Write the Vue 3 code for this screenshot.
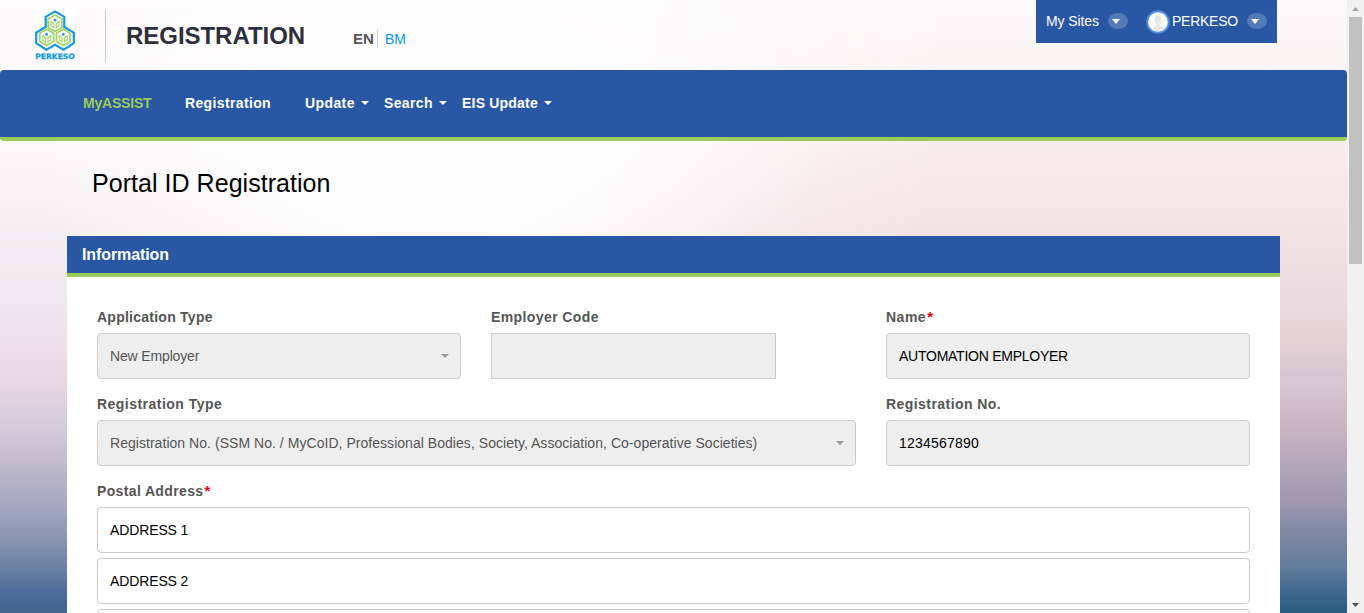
<script setup>
const menu = [
  { label: 'MyASSIST', cls: 'm-home' },
  { label: 'Registration', cls: 'm-reg' },
  { label: 'Update', cls: 'm-upd', drop: true },
  { label: 'Search', cls: 'm-search', drop: true },
  { label: 'EIS Update', cls: 'm-eis', drop: true },
]
const cells = [[20, 13.2], [11.7, 27.4], [28.3, 27.4]]
const addresses = ['ADDRESS 1', 'ADDRESS 2', '']
</script>

<template>
  <div class="screen">
    <div class="page">
      <header class="top">
        <svg class="logo" width="42" height="52" viewBox="-1 0 42 52">
          <rect width="40" height="50" fill="#fff" />
          <path d="M20 1.400 29.300 6.800V17L38.800 22.600V33.200L28.600 39.600 20 34.800 11.400 39.600 1.200 33.200V22.600L10.700 17V6.800Z" fill="none" stroke="#1698dc" stroke-width="2.200" />
          <g v-for="(c, i) in cells" :key="i" :transform="`translate(${c[0]} ${c[1]})`" fill="none" stroke="#9ed364" stroke-width="1.700">
            <path d="M0-8.200 6.900-4.200V4.200L0 8.200-6.900 4.200V-4.200Z" />
            <path d="M-4-2.200V2.600L-1.200 4.600V.6L-4-2.200M4-2.200V2.600L1.200 4.600V.6L4-2.200" stroke-width="1.100" />
            <circle cy="-3" r="1.400" fill="#1698dc" stroke="none" />
          </g>
          <text x="0.200" y="49.300" textLength="39.600" lengthAdjust="spacingAndGlyphs" class="logo-text">PERKESO</text>
        </svg>
        <h1 class="brand"><span>REGISTRATION</span></h1>
        <div class="lang"><b>EN</b><a>BM</a></div>
        <div class="user">
          <span class="sites">My Sites</span>
          <i class="pill"><svg width="8" height="5"><path d="M0 0h8L4 5z" fill="#fff" /></svg></i>
          <svg class="avatar" width="24" height="24" viewBox="0 0 24 24">
            <circle cx="12" cy="12" r="10.8" fill="#fff" stroke="#4e8edd" stroke-width="2" />
            <path d="M12 5.400c-2.600 0-3.800 2-3.400 4.500.2 2 1 3.300 1.700 4v1.400L7 17.500v2.300q5 2.600 10 0v-2.300l-3.300-2.200v-1.400c.7-.7 1.500-2 1.700-4C15.800 7.400 14.600 5.400 12 5.400z" fill="#e6e6e6" />
          </svg>
          <span class="name">PERKESO</span>
          <i class="pill"><svg width="8" height="5"><path d="M0 0h8L4 5z" fill="#fff" /></svg></i>
        </div>
      </header>

      <nav class="nav">
        <a v-for="m in menu" :key="m.label" :class="m.cls"><span>{{ m.label }}</span><svg v-if="m.drop" width="8" height="4"><path d="M0 0h8L4 4z" fill="#fff" /></svg></a>
      </nav>

      <h2 class="title"><span>Portal ID Registration</span></h2>

      <section class="card">
        <div class="card-head"><span>Information</span></div>
        <form class="form">
          <div class="field">
            <label class="l-app">Application Type</label>
            <div class="box off select"><span class="v-new">New Employer</span><svg width="8" height="4"><path d="M0 0h8L4 4z" fill="#999" /></svg></div>
          </div>
          <div class="field">
            <label class="l-code">Employer Code</label>
            <div class="box off code"></div>
          </div>
          <div class="field">
            <label><span class="l-name">Name</span><em>*</em></label>
            <div class="box off"><span class="v-name">AUTOMATION EMPLOYER</span></div>
          </div>
          <div class="field wide">
            <label class="l-rtype">Registration Type</label>
            <div class="box off select"><span class="v-rtype">Registration No. (SSM No. / MyCoID, Professional Bodies, Society, Association, Co-operative Societies)</span><svg width="8" height="4"><path d="M0 0h8L4 4z" fill="#999" /></svg></div>
          </div>
          <div class="field">
            <label class="l-rno">Registration No.</label>
            <div class="box off"><span class="v-rno">1234567890</span></div>
          </div>
          <div class="field full">
            <label><span class="l-post">Postal Address</span><em>*</em></label>
            <div v-for="(a, i) in addresses" :key="i" class="box line"><span class="v-addr">{{ a }}</span></div>
          </div>
        </form>
      </section>
    </div>
    <aside class="scroll">
      <svg width="17" height="17"><path d="M5 11 8.500 7 12 11z" fill="#a3a3a3" /></svg>
      <div class="thumb"></div>
      <svg class="down" width="17" height="17"><path d="M5 7 8.500 11 12 7z" fill="#505050" /></svg>
    </aside>
  </div>
</template>

<style>
body { margin: 0; overflow: hidden; }
</style>

<style scoped>
* { box-sizing: border-box; }
.screen { display: flex; width: 1364px; height: 613px; overflow: hidden; font: 14px/20px "Liberation Sans", Arial, sans-serif; color: #000; white-space: nowrap; }
.page {
  position: relative; isolation: isolate; width: 1347px; height: 613px; overflow: hidden;
  background: linear-gradient(180deg, #fdfbfc 0, #fbf8fa 150px, #f1ecef 260px, #eee6eb 310px, #ecdfe8 350px, #e3d6e1 390px, #cfc9d7 435px, #b9b5c9 475px, #a5a7c0 507px, #8893b0 540px, #647b9f 575px, #4c6c9a 592px, #43628c 613px);
}
.page::before {
  content: ""; position: absolute; inset: 0; z-index: -1;
  background: linear-gradient(180deg, #fcf9fa 0, #faf4f4 70px, #f8eded 141px, #f3e2e4 235px, #ecdce1 290px, #e4d1d6 340px, #d7c5cf 385px, #c8b3c1 430px, #b1a7b8 465px, #a09ab1 500px, #8389a5 530px, #627c9b 568px, #426b91 590px, #285a7e 613px);
  -webkit-mask-image: linear-gradient(100deg, transparent 44%, #000 66%);
  mask-image: linear-gradient(100deg, transparent 44%, #000 66%);
}
.page::after {
  content: ""; position: absolute; inset: 0 0 auto 0; height: 300px; z-index: -1;
  background: radial-gradient(ellipse 400px 240px at 430px 150px, rgba(254,253,253,.95) 35%, rgba(255,255,255,0));
}
.top { display: flex; height: 70px; padding-left: 34px; }
.logo { margin-top: 10px; }
.logo-text { font: 900 7.500px "DejaVu Sans", sans-serif; fill: #1698dc; stroke: #1698dc; stroke-width: .3px; }
.brand { width: 208px; height: 52px; margin: 10px 0 0 29px; padding-left: 20px; border-left: 1px solid #ccc; font-size: 24px; line-height: 52px; color: #2e2f3d; letter-spacing: -.04px; }
.lang { display: flex; width: 80px; height: 18px; margin: 30px 0 0 40px; font-size: 15px; line-height: 18px; }
.lang b { width: 25px; color: #555; border-right: 1px solid #ccc; }
.lang a { margin-left: 7px; color: #009ae5; font-size: 14px; }
.user { display: flex; width: 241px; height: 43px; margin-left: 603px; padding-left: 10px; background: #2957a4; color: #fff; line-height: 43px; }
.sites { width: 62px; letter-spacing: -.1px; }
.pill { display: flex; align-items: center; justify-content: center; width: 20px; height: 16px; padding-right: 4px; margin-top: 13px; background: #5479b7; border-radius: 50%; }
.avatar { margin: 10px 2px 0 18px; }
.name { width: 75px; letter-spacing: -.25px; }
.nav { display: flex; align-items: center; height: 71px; padding: 0 0 2px 83px; background: #2957a4; border-bottom: 4px solid #9bcb5a; border-radius: 4px; color: #fff; font-weight: bold; }
.nav a { display: flex; align-items: center; }
.nav svg { margin: 1px 0 0 auto; }
.m-home { width: 102px; color: #9bcb5a; letter-spacing: -.2px; }
.m-reg { width: 120px; letter-spacing: .36px; }
.m-upd { width: 64px; margin-right: 15px; letter-spacing: .4px; }
.m-search { width: 63px; margin-right: 15px; letter-spacing: .35px; }
.m-eis { width: 90px; letter-spacing: .2px; }
.title { height: 95px; margin: 0; padding: 25px 0 0 92px; font-size: 25px; font-weight: normal; line-height: 34px; letter-spacing: .04px; }
.card { width: 1213px; height: 380px; margin-left: 67px; background: #fff; }
.card-head { height: 41px; padding-left: 15px; background: #2957a4; border-bottom: 4px solid #9bcb5a; color: #fff; font-size: 16px; font-weight: bold; line-height: 38px; letter-spacing: -.1px; }
.form { display: grid; grid-template-columns: 364px 365px 364px; column-gap: 30px; padding: 30px 30px 0; }
.field { height: 87px; }
.field label { display: block; height: 26px; font-weight: bold; color: #555; }
.field em { color: red; font-style: normal; font-size: 15px; margin-left: 1px; }
.l-app { letter-spacing: .25px; }
.l-code { letter-spacing: .4px; }
.l-name { letter-spacing: .5px; }
.l-rtype { letter-spacing: .47px; }
.l-rno { letter-spacing: .44px; }
.l-post { letter-spacing: .36px; }
.v-new { letter-spacing: -.15px; }
.v-name { letter-spacing: -.25px; }
.v-rtype { letter-spacing: .04px; }
.v-rno { letter-spacing: .22px; }
.v-addr { letter-spacing: -.12px; }
.wide { grid-column: span 2; }
.full { grid-column: span 3; }
.box { display: flex; align-items: center; height: 46px; padding: 0 11px 0 12px; border: 1px solid #ccc; border-radius: 4px; background: #fff; }
.off { background: #eee; }
.select { color: #555; }
.select svg { margin-left: auto; }
.code { width: 285px; border-radius: 0; }
.line { margin-bottom: 5px; }
.scroll { position: relative; width: 17px; height: 613px; background: #f1f1f1; display: flex; flex-direction: column; }
.thumb { width: 13px; height: 247px; margin-left: 2px; background: #c1c1c1; }
.down { margin-top: auto; }
</style>
